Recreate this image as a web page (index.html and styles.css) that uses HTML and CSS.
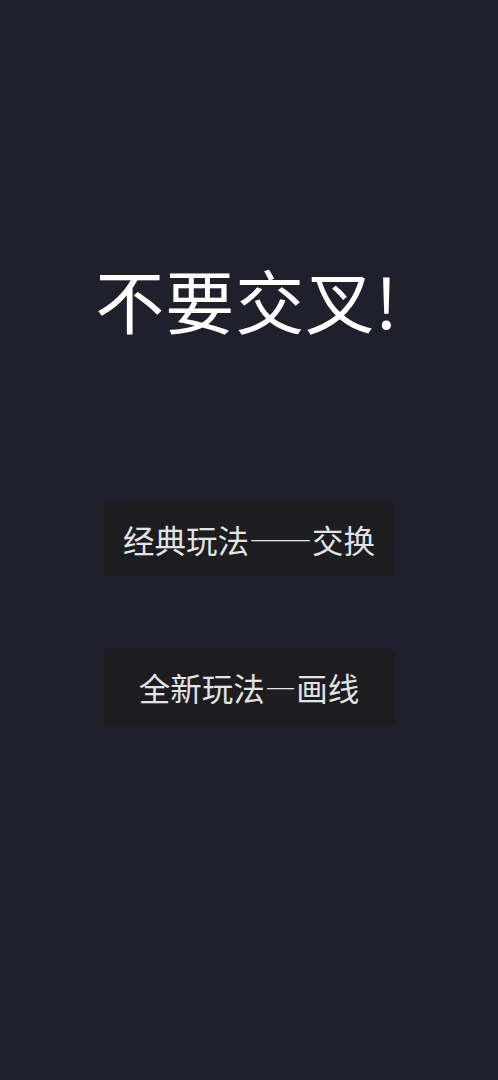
FILE: index.html
```html
<!DOCTYPE html>
<html lang="zh-CN">
<head>
<meta charset="utf-8">
<title>不要交叉!</title>
<link rel="stylesheet" href="styles.css">
</head>
<body>
<main class="screen">
  <h1 class="title">不要交叉!</h1>
  <div class="menu">
    <button class="mode-btn">经典玩法——交换</button>
    <button class="mode-btn">全新玩法—画线</button>
  </div>
</main>
</body>
</html>
```
FILE: styles.css
```css
html, body {
  margin: 0;
  padding: 0;
  background: #20202d;
}
.screen {
  width: 498px;
  height: 1080px;
  display: flex;
  flex-direction: column;
  align-items: center;
  box-sizing: border-box;
  padding-top: 265px;
  font-family: "Noto Sans CJK SC", "Noto Sans", sans-serif;
}
.title {
  margin: 0 4px 0 0;
  font-size: 69px;
  line-height: 69px;
  height: 69px;
  font-weight: 400;
  color: #ffffff;
  letter-spacing: 1px;
}
.menu {
  margin-top: 169px;
  display: flex;
  flex-direction: column;
  gap: 75px;
}
.mode-btn {
  width: 291px;
  height: 73px;
  border: none;
  padding: 0;
  background: #1c1c21;
  color: #e3e3e3;
  font-family: "Noto Sans CJK SC", "Noto Sans", sans-serif;
  font-size: 31.5px;
  line-height: 73px;
  text-align: center;
}
```
